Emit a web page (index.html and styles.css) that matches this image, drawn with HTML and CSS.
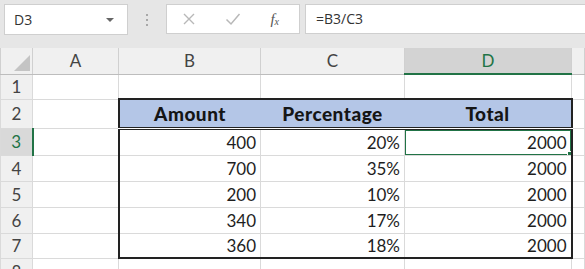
FILE: index.html
```
<!DOCTYPE html>
<html lang="en">
<head>
<meta charset="UTF-8">
<meta name="viewport" content="width=device-width, initial-scale=1.0">
<title>Sheet</title>
<link rel="stylesheet" href="styles.css">
</head>
<body>
<div class="toolbar">
    <div class="name-box">
        <span>D3</span>
        <span class="caret"></span>
    </div>
    <div class="grip"><i></i><i></i><i></i></div>
    <div class="fx-box">
        <svg width="14" height="14" viewBox="0 0 14 14"><path d="M2 2 L12 12 M12 2 L2 12" stroke="#b8b8b8" stroke-width="1.4" fill="none"/></svg>
        <svg width="16" height="14" viewBox="0 0 16 14"><path d="M1.5 7.5 L6 12 L14.5 2" stroke="#b8b8b8" stroke-width="1.5" fill="none"/></svg>
        <span class="fx">f<sub>x</sub></span>
    </div>
    <div class="formula">=B3/C3</div>
</div>

<table class="sheet">
    <colgroup>
        <col style="width:32px">
        <col style="width:86px">
        <col style="width:142px">
        <col style="width:144px">
        <col style="width:167px">
        <col>
    </colgroup>
    <tr class="col-heads">
        <th class="corner"><span class="tri"></span></th>
        <th>A</th>
        <th>B</th>
        <th>C</th>
        <th class="active">D</th>
        <th></th>
    </tr>
    <tr class="r1">
        <th class="row-head">1</th>
        <td></td><td></td><td></td><td></td><td></td>
    </tr>
    <tr class="r2">
        <th class="row-head">2</th>
        <td></td>
        <td class="hd first">Amount</td>
        <td class="hd">Percentage</td>
        <td class="hd last">Total</td>
        <td></td>
    </tr>
    <tr class="r3">
        <th class="row-head active">3</th>
        <td></td>
        <td class="num first">400</td>
        <td class="num">20%</td>
        <td class="num last selected">2000<span class="handle"></span></td>
        <td></td>
    </tr>
    <tr>
        <th class="row-head">4</th>
        <td></td>
        <td class="num first">700</td>
        <td class="num">35%</td>
        <td class="num last">2000</td>
        <td></td>
    </tr>
    <tr>
        <th class="row-head">5</th>
        <td></td>
        <td class="num first">200</td>
        <td class="num">10%</td>
        <td class="num last">2000</td>
        <td></td>
    </tr>
    <tr>
        <th class="row-head">6</th>
        <td></td>
        <td class="num first">340</td>
        <td class="num">17%</td>
        <td class="num last">2000</td>
        <td></td>
    </tr>
    <tr class="r7">
        <th class="row-head">7</th>
        <td></td>
        <td class="num first bottom">360</td>
        <td class="num bottom">18%</td>
        <td class="num last bottom">2000</td>
        <td></td>
    </tr>
    <tr>
        <th class="row-head">8</th>
        <td></td><td></td><td></td><td></td><td></td>
    </tr>
</table>
</body>
</html>
```
FILE: styles.css
```
body {
    margin: 0;
    padding: 0;
    width: 585px;
    height: 269px;
    overflow: hidden;
    background: #fff;
    font-family: Lato, "Liberation Sans", sans-serif;
}

.toolbar {
    display: flex;
    align-items: flex-start;
    height: 48px;
    padding-top: 4px;
    box-sizing: border-box;
    background: #e6e6e6;
}

.name-box {
    display: flex;
    align-items: center;
    justify-content: space-between;
    width: 124px;
    height: 31px;
    margin-left: 4px;
    padding: 0 13px 0 9px;
    box-sizing: border-box;
    background: #fff;
    border: 1px solid #cfcfcf;
    font-family: "Open Sans", sans-serif;
    font-size: 14px;
    color: #333;
}

.caret {
    width: 0;
    height: 0;
    border-left: 4px solid transparent;
    border-right: 4px solid transparent;
    border-top: 4px solid #666;
}

.grip {
    display: flex;
    flex-direction: column;
    gap: 3px;
    width: 38px;
    align-items: center;
    padding-top: 10px;
}

.grip i {
    width: 2px;
    height: 2px;
    background: #a8a8a8;
}

.fx-box {
    display: flex;
    align-items: center;
    justify-content: space-between;
    width: 134px;
    height: 30px;
    padding: 0 20px 0 15px;
    box-sizing: border-box;
    background: #fff;
    border: 1px solid #cfcfcf;
}

.fx {
    font-family: "Liberation Serif", serif;
    font-style: italic;
    font-size: 15px;
    color: #555;
}

.fx sub {
    font-size: 10px;
    vertical-align: -1px;
}

.formula {
    flex: 1;
    height: 30px;
    margin-left: 5px;
    padding-left: 10px;
    box-sizing: border-box;
    background: #fff;
    border: 1px solid #cfcfcf;
    border-right: none;
    line-height: 28px;
    font-family: "Open Sans", sans-serif;
    font-size: 14px;
    color: #333;
}

.sheet {
    width: 585px;
    table-layout: fixed;
    border-collapse: collapse;
    font-size: 17px;
    color: #1e1e1e;
}

.sheet td,
.sheet th {
    padding: 0 4px;
    border: 1px solid #dadada;
    white-space: nowrap;
    overflow: hidden;
}

.col-heads th {
    height: 23px;
    background: #f0f0f0;
    border-color: #d0d0d0;
    border-top: none;
    border-bottom: 1px solid #bdbdbd;
    font-weight: normal;
    color: #444;
    text-align: center;
}

.col-heads th.active {
    background: #d3d3d3;
    color: #217346;
    border-bottom: 2px solid #217346;
}

.corner {
    position: relative;
}

.tri {
    position: absolute;
    right: 2px;
    bottom: 3px;
    width: 0;
    height: 0;
    border-left: 16px solid transparent;
    border-bottom: 16px solid #c4c4c4;
}

.row-head {
    background: #f0f0f0;
    border-color: #d0d0d0;
    border-left: none;
    border-right: 1px solid #bdbdbd;
    font-weight: normal;
    color: #444;
    text-align: center;
}

.row-head.active {
    background: #d9d9d9;
    color: #217346;
    border-right: 2px solid #217346;
}

.sheet tr { height: 26px; }
.sheet tr.r1 { height: 25px; }
.sheet tr.r2 { height: 29px; }
.sheet tr.r3 { height: 27px; }
.sheet tr.r7 { height: 25px; }

.hd {
    background: #b4c6e7;
    font-size: 19px;
    font-weight: 900;
    letter-spacing: 0.5px;
    color: #151515;
    text-align: center;
    border-top: 2px solid #222 !important;
    border-bottom: 3px double #222 !important;
}

.hd + .hd {
    border-left-style: hidden;
}

.num {
    text-align: right;
}

.first { border-left: 2px solid #222 !important; }
.last { border-right: 2px solid #222 !important; }
.bottom { border-bottom: 2px solid #222 !important; }

.selected {
    position: relative;
    overflow: visible;
}

.selected::after {
    content: "";
    position: absolute;
    left: -1px;
    top: -1px;
    right: -1px;
    bottom: -1px;
    border: 2px solid #217346;
}

.handle {
    position: absolute;
    right: -4px;
    bottom: -4px;
    width: 6px;
    height: 6px;
    background: #217346;
    border: 1px solid #fff;
    z-index: 1;
}
```
